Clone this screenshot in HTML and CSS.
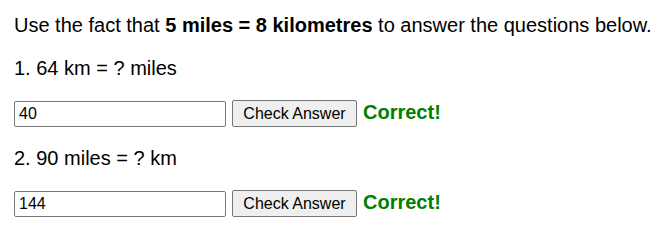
FILE: index.html
```html
<!DOCTYPE html>
<html>
<head>
<meta charset="utf-8">
<link rel="stylesheet" href="styles.css">
</head>
<body>
<div class="page">
  <p class="intro">Use the fact that <strong>5 miles = 8 kilometres</strong> to answer the questions below.</p>
  <p class="question">1. 64 km = ? miles</p>
  <div class="answer-row">
    <input class="answer" type="text" value="40">
    <button class="check">Check Answer</button>
    <span class="result">Correct!</span>
  </div>
  <p class="question">2. 90 miles = ? km</p>
  <div class="answer-row">
    <input class="answer" type="text" value="144">
    <button class="check">Check Answer</button>
    <span class="result">Correct!</span>
  </div>
</div>
</body>
</html>
```
FILE: styles.css
```css
html, body {
  margin: 0;
  padding: 0;
  background: #ffffff;
  overflow: hidden;
}
.page {
  padding: 14px 0 0 14px;
  font-family: "Liberation Sans", Arial, sans-serif;
  font-size: 20px;
  line-height: 23px;
  color: #000;
}
.page p {
  margin: 0 0 20px 0;
}
.intro {
  white-space: nowrap;
}
.answer-row {
  display: flex;
  align-items: center;
  gap: 6px;
  margin: 0 0 20px 0;
  height: 27px;
}
.answer {
  box-sizing: border-box;
  width: 212px;
  height: 26px;
  border: 1px solid #767676;
  border-radius: 2px;
  padding: 1px 4px;
  font-family: "Liberation Sans", Arial, sans-serif;
  font-size: 16px;
  color: #000;
}
.check {
  box-sizing: border-box;
  width: 125px;
  height: 27px;
  border: 1px solid #767676;
  border-radius: 2px;
  background: #efefef;
  font-family: "Liberation Sans", Arial, sans-serif;
  font-size: 16px;
  color: #000;
  padding: 0;
}
.result {
  color: #008000;
  font-weight: bold;
  font-size: 20px;
  margin-top: -3px;
}
```
